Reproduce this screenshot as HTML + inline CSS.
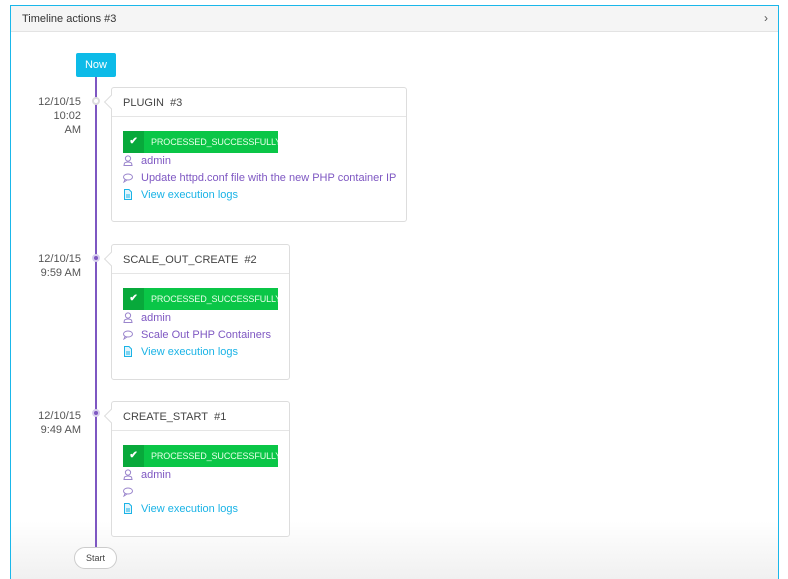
<!DOCTYPE html>
<html><head><meta charset="utf-8"><style>
*{margin:0;padding:0;box-sizing:border-box}
html,body{width:788px;height:579px;overflow:hidden}
body{background:#fff;font-family:"Liberation Sans",sans-serif;position:relative;font-size:11px}
.panel{position:absolute;left:10px;top:5px;width:769px;height:574px;border:1px solid #1ab7ea;border-bottom:none;background:linear-gradient(#fff 515px,#f0f0f0 574px)}
.hdr{height:26px;background:#f5f5f5;border-bottom:1px solid #e3e3e3;padding:7px 11px;color:#333;font-size:11px}
.chev{position:absolute;right:10px;top:5px;color:#555;font-size:12px}
.now{position:absolute;left:76px;top:53px;width:40px;height:24px;background:#0dbbe8;color:#fff;text-align:center;line-height:24px;border-radius:2px;font-size:11px}
.line{position:absolute;left:95px;top:77px;width:2px;height:471px;background:#7e57c2}
.dot{position:absolute;left:92px;width:8px;height:8px;border-radius:50%;background:#7e57c2;border:2px solid #d8d0ee}
.date{position:absolute;width:60px;left:21px;text-align:right;color:#555;font-size:11px;line-height:14px}
.card{position:absolute;left:111px;border:1px solid #ddd;border-radius:3px;background:#fff}
.card:before{content:"";position:absolute;left:-6px;top:9px;width:9px;height:9px;background:#fff;border-left:1px solid #ddd;border-bottom:1px solid #ddd;transform:rotate(45deg)}
.ct{height:29px;border-bottom:1px solid #e5e5e5;padding:9px 11px;color:#444;font-size:11px}
.badge{position:absolute;left:11px;top:43px;width:155px;height:22px;background:#0ac647;color:#e8ffe8;font-size:9px;line-height:22px;white-space:nowrap;overflow:hidden;letter-spacing:-0.1px}
.badge b{display:inline-block;vertical-align:top;width:21px;height:22px;background:#08a93b;text-align:center;color:#fff;margin-right:7px;font-size:10px}
.row{position:absolute;left:11px;color:#7e57c2;font-size:11px;white-space:nowrap;line-height:14px}
.row svg{display:inline-block;vertical-align:-2px;margin-right:8px}
.row.l{color:#1ab3e6}
.start{position:absolute;left:74px;top:547px;width:43px;height:22px;border:1px solid #ccc;border-radius:11px;background:#fff;text-align:center;line-height:20px;color:#444;font-size:9px}
</style></head><body>
<div class="panel"><div class="hdr">Timeline actions #3</div><div class="chev">›</div></div>
<div class="now">Now</div>
<div class="line"></div>
<div class="dot" style="top:97px;background:#fff;border-color:#ddd"></div>
<div class="dot" style="top:254px"></div>
<div class="dot" style="top:409px"></div>
<div class="date" style="top:95px">12/10/15<br>10:02<br>AM</div>
<div class="date" style="top:252px">12/10/15<br>9:59 AM</div>
<div class="date" style="top:409px">12/10/15<br>9:49 AM</div>

<svg width="0" height="0" style="position:absolute"><defs>
<g id="u"><circle cx="5" cy="3.5" r="2.6" fill="none" stroke="#9a85cc"/><path d="M1 10.5 L1.5 8 Q5 6 8.5 8 L9 10.5 Z" fill="none" stroke="#9a85cc"/></g>
<g id="c"><ellipse cx="5" cy="5" rx="4.5" ry="3" fill="none" stroke="#9a85cc"/><path d="M2 7.5 L1 10 L4 8" fill="none" stroke="#9a85cc"/></g>
<g id="f"><path d="M1.5 0.5 H6 L8.5 3 V10.5 H1.5 Z" fill="#e3f5fc" stroke="#1ab3e6"/><path d="M3 6 H7 M3 8 H7" stroke="#1ab3e6"/></g>
</defs></svg>

<div class="card" style="top:87px;width:296px;height:135px"><div class="ct">PLUGIN&nbsp; #3</div>
<div class="badge"><b>✔</b>PROCESSED_SUCCESSFULLY</div>
<div class="row" style="top:66px"><svg width="10" height="11"><use href="#u"/></svg>admin</div>
<div class="row" style="top:83px"><svg width="10" height="11"><use href="#c"/></svg>Update httpd.conf file with the new PHP container IP</div>
<div class="row l" style="top:100px"><svg width="10" height="11"><use href="#f"/></svg>View execution logs</div></div>

<div class="card" style="top:244px;width:179px;height:136px"><div class="ct">SCALE_OUT_CREATE&nbsp; #2</div>
<div class="badge"><b>✔</b>PROCESSED_SUCCESSFULLY</div>
<div class="row" style="top:66px"><svg width="10" height="11"><use href="#u"/></svg>admin</div>
<div class="row" style="top:83px"><svg width="10" height="11"><use href="#c"/></svg>Scale Out PHP Containers</div>
<div class="row l" style="top:100px"><svg width="10" height="11"><use href="#f"/></svg>View execution logs</div></div>

<div class="card" style="top:401px;width:179px;height:136px"><div class="ct">CREATE_START&nbsp; #1</div>
<div class="badge"><b>✔</b>PROCESSED_SUCCESSFULLY</div>
<div class="row" style="top:66px"><svg width="10" height="11"><use href="#u"/></svg>admin</div>
<div class="row" style="top:83px"><svg width="10" height="11"><use href="#c"/></svg></div>
<div class="row l" style="top:100px"><svg width="10" height="11"><use href="#f"/></svg>View execution logs</div></div>

<div class="start">Start</div>
</body></html>
